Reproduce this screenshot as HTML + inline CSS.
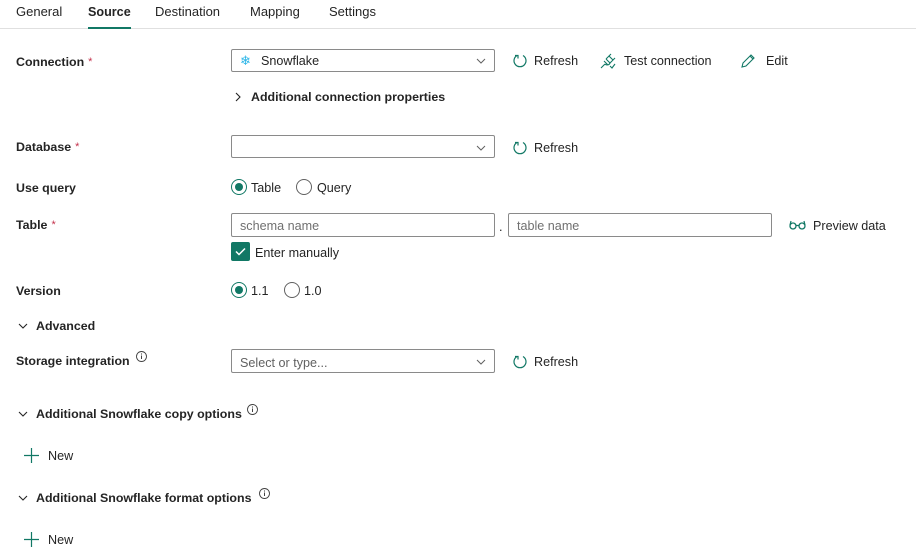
<!DOCTYPE html>
<html><head><meta charset="utf-8"><style>
body{margin:0;width:916px;height:557px;background:#fff;font-family:"Liberation Sans",sans-serif;font-size:12.6px;color:#242424;position:relative;overflow:hidden}
.a{position:absolute;line-height:16px;white-space:nowrap;margin-top:1px}
.b{font-weight:bold;font-size:12.4px}
.tab{font-size:13px}
.box{position:absolute;border:1px solid #8a8a8a;border-radius:2px;box-sizing:border-box;background:#fff}
.ph{color:#707070}
.req{color:#c4314b;font-size:11px;vertical-align:top;margin-left:4px;font-weight:normal}
svg{position:absolute;overflow:visible}
.rad{position:absolute;width:16px;height:16px;border:1px solid #616161;border-radius:50%;box-sizing:border-box}
.rad.on{border-color:#117865}
.rad.on:after{content:"";position:absolute;left:3px;top:3px;width:8px;height:8px;border-radius:50%;background:#117865}
</style></head><body>
<div class="a tab" style="left:16px;top:3px">General</div>
<div class="a tab" style="left:88px;top:3px;font-weight:bold;font-size:12.6px">Source</div>
<div class="a tab" style="left:155px;top:3px">Destination</div>
<div class="a tab" style="left:250px;top:3px">Mapping</div>
<div class="a tab" style="left:329px;top:3px">Settings</div>
<div style="position:absolute;left:0;top:28px;width:916px;height:1px;background:#e0e0e0"></div>
<div style="position:absolute;left:88px;top:27px;width:43px;height:2px;background:#117865"></div>

<div class="a b" style="left:16px;top:53px">Connection<span class="req">*</span></div>
<div class="box" style="left:231px;top:49px;width:264px;height:23px"></div>
<div class="a" style="left:240px;top:52px;color:#29b5e8;font-size:13px">❄</div>
<div class="a" style="left:261px;top:52px">Snowflake</div>
<svg style="left:476px;top:58px" width="10" height="6"><path d="M1 1l4 4 4-4" fill="none" stroke="#616161"/></svg>

<svg style="left:512px;top:53px" width="16" height="16"><path d="M5 2.5A6 6 0 1 0 11 2.5" fill="none" stroke="#117865" stroke-width="1.2"/><path d="M3 2.5h3v3" fill="none" stroke="#117865" stroke-width="1.2"/></svg>
<div class="a" style="left:534px;top:52px">Refresh</div>
<svg style="left:600px;top:53px" width="16" height="16"><path d="M1 15l4-4M11 1l-3 3M15 5l-3 3M4 8l4 4M6 6l4 4M5 11a3 3 0 0 0 5-1M6 6l3-3 4 4-3 3" fill="none" stroke="#117865" stroke-width="1.1"/><path d="M10 13l2 2 3-4" fill="none" stroke="#117865" stroke-width="1.1"/></svg>
<div class="a" style="left:624px;top:52px">Test connection</div>
<svg style="left:741px;top:54px" width="14" height="14"><path d="M1 13l1-4 8-8 3 3-8 8z M9 2l3 3" fill="none" stroke="#117865" stroke-width="1.1"/></svg>
<div class="a" style="left:766px;top:52px">Edit</div>

<svg style="left:235px;top:92px" width="6" height="10"><path d="M1 1l4 4-4 4" fill="none" stroke="#242424" stroke-width="1.1"/></svg>
<div class="a b" style="left:251px;top:88px">Additional connection properties</div>

<div class="a b" style="left:16px;top:138px">Database<span class="req">*</span></div>
<div class="box" style="left:231px;top:135px;width:264px;height:23px"></div>
<svg style="left:476px;top:145px" width="10" height="6"><path d="M1 1l4 4 4-4" fill="none" stroke="#616161"/></svg>
<svg style="left:512px;top:140px" width="16" height="16"><path d="M5 2.5A6 6 0 1 0 11 2.5" fill="none" stroke="#117865" stroke-width="1.2"/><path d="M3 2.5h3v3" fill="none" stroke="#117865" stroke-width="1.2"/></svg>
<div class="a" style="left:534px;top:139px">Refresh</div>

<div class="a b" style="left:16px;top:179px">Use query</div>
<div class="rad on" style="left:231px;top:179px"></div>
<div class="a" style="left:251px;top:179px">Table</div>
<div class="rad" style="left:296px;top:179px"></div>
<div class="a" style="left:317px;top:179px">Query</div>

<div class="a b" style="left:16px;top:216px">Table<span class="req">*</span></div>
<div class="box" style="left:231px;top:213px;width:264px;height:24px"></div>
<div class="a ph" style="left:240px;top:217px">schema name</div>
<div class="a" style="left:499px;top:218px">.</div>
<div class="box" style="left:508px;top:213px;width:264px;height:24px"></div>
<div class="a ph" style="left:517px;top:217px">table name</div>
<svg style="left:789px;top:220px" width="18" height="10"><circle cx="4" cy="6" r="3" fill="none" stroke="#117865" stroke-width="1.3"/><circle cx="13" cy="6" r="3" fill="none" stroke="#117865" stroke-width="1.3"/><path d="M7 5.5h3M1 5l1-4M16 5l-1-4" fill="none" stroke="#117865" stroke-width="1.2"/></svg>
<div class="a" style="left:813px;top:217px">Preview data</div>

<div style="position:absolute;left:231px;top:242px;width:19px;height:19px;background:#117865;border-radius:2px"></div>
<svg style="left:235px;top:247px" width="11" height="9"><path d="M1 4.5l3 3 6-6" fill="none" stroke="#fff" stroke-width="1.5"/></svg>
<div class="a" style="left:255px;top:244px">Enter manually</div>

<div class="a b" style="left:16px;top:282px">Version</div>
<div class="rad on" style="left:231px;top:282px"></div>
<div class="a" style="left:251px;top:282px">1.1</div>
<div class="rad" style="left:284px;top:282px"></div>
<div class="a" style="left:304px;top:282px">1.0</div>

<svg style="left:18px;top:323px" width="10" height="6"><path d="M1 1l4 4 4-4" fill="none" stroke="#242424" stroke-width="1.1"/></svg>
<div class="a b" style="left:36px;top:317px">Advanced</div>

<div class="a b" style="left:16px;top:352px">Storage integration</div>
<svg style="left:136px;top:351px" width="11" height="11"><circle cx="5.5" cy="5.5" r="5" fill="none" stroke="#424242" stroke-width=".9"/><path d="M5.5 4.5v3.5" stroke="#424242"/><circle cx="5.5" cy="3" r=".6" fill="#424242"/></svg>
<div class="box" style="left:231px;top:349px;width:264px;height:24px"></div>
<div class="a ph" style="left:240px;top:354px;color:#616161">Select or type...</div>
<svg style="left:476px;top:359px" width="10" height="6"><path d="M1 1l4 4 4-4" fill="none" stroke="#616161"/></svg>
<svg style="left:512px;top:354px" width="16" height="16"><path d="M5 2.5A6 6 0 1 0 11 2.5" fill="none" stroke="#117865" stroke-width="1.2"/><path d="M3 2.5h3v3" fill="none" stroke="#117865" stroke-width="1.2"/></svg>
<div class="a" style="left:534px;top:353px">Refresh</div>

<svg style="left:18px;top:411px" width="10" height="6"><path d="M1 1l4 4 4-4" fill="none" stroke="#242424" stroke-width="1.1"/></svg>
<div class="a b" style="left:36px;top:405px">Additional Snowflake copy options</div>
<svg style="left:247px;top:404px" width="11" height="11"><circle cx="5.5" cy="5.5" r="5" fill="none" stroke="#424242" stroke-width=".9"/><path d="M5.5 4.5v3.5" stroke="#424242"/><circle cx="5.5" cy="3" r=".6" fill="#424242"/></svg>
<svg style="left:24px;top:448px" width="15" height="15"><path d="M7.5 0v15M0 7.5h15" stroke="#117865" stroke-width="1.2"/></svg>
<div class="a" style="left:48px;top:447px">New</div>

<svg style="left:18px;top:495px" width="10" height="6"><path d="M1 1l4 4 4-4" fill="none" stroke="#242424" stroke-width="1.1"/></svg>
<div class="a b" style="left:36px;top:489px">Additional Snowflake format options</div>
<svg style="left:259px;top:488px" width="11" height="11"><circle cx="5.5" cy="5.5" r="5" fill="none" stroke="#424242" stroke-width=".9"/><path d="M5.5 4.5v3.5" stroke="#424242"/><circle cx="5.5" cy="3" r=".6" fill="#424242"/></svg>
<svg style="left:24px;top:532px" width="15" height="15"><path d="M7.5 0v15M0 7.5h15" stroke="#117865" stroke-width="1.2"/></svg>
<div class="a" style="left:48px;top:531px">New</div>
</body></html>
